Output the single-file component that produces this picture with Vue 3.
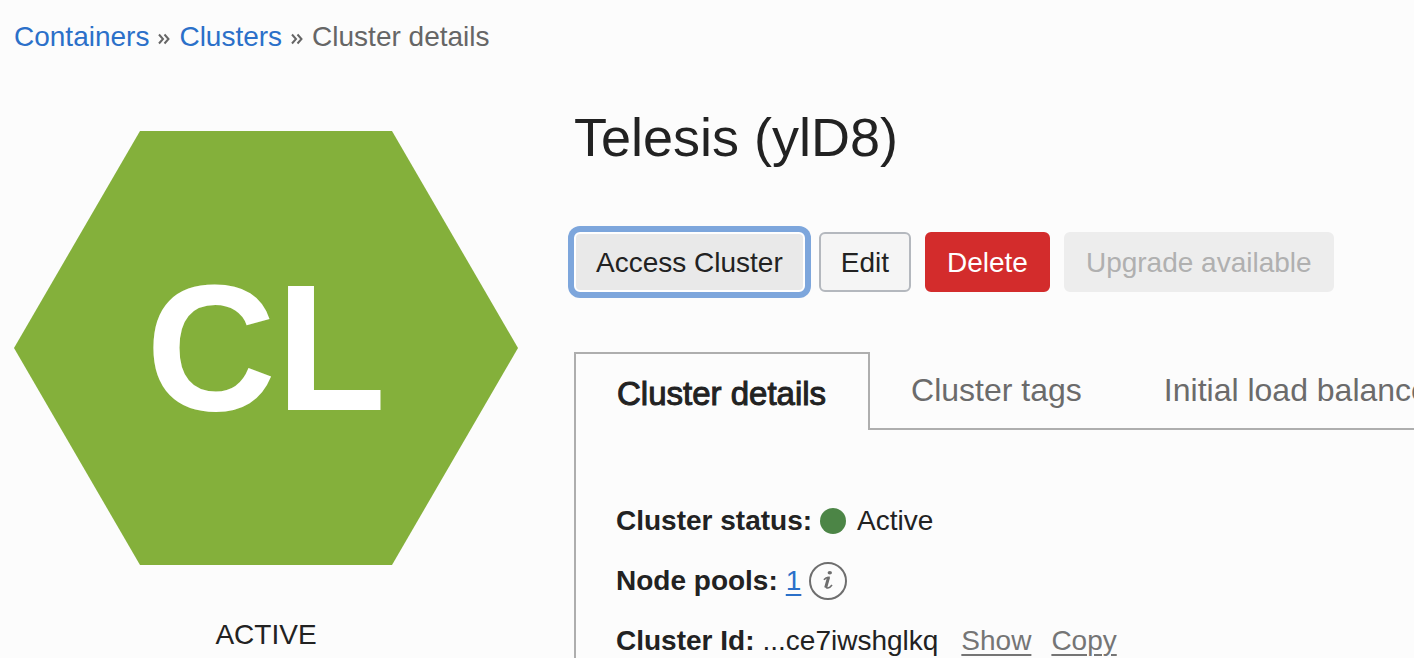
<script setup>
const tabs = [
  { label: 'Cluster details', active: true },
  { label: 'Cluster tags', active: false },
  { label: 'Initial load balancer tags', active: false },
]
</script>

<template>
  <div class="page">
    <nav class="breadcrumb" aria-label="Breadcrumb">
      <a href="#containers">Containers</a>
      <svg class="sep" viewBox="0 0 12 12" aria-hidden="true"><path d="M1 1.5 L5 6 L1 10.5 M6.5 1.5 L10.5 6 L6.5 10.5" /></svg>
      <a href="#clusters">Clusters</a>
      <svg class="sep" viewBox="0 0 12 12" aria-hidden="true"><path d="M1 1.5 L5 6 L1 10.5 M6.5 1.5 L10.5 6 L6.5 10.5" /></svg>
      <span>Cluster details</span>
    </nav>

    <div class="body">
      <aside class="summary">
        <div class="hexagon"><span>CL</span></div>
        <p class="state">ACTIVE</p>
      </aside>

      <main class="content">
        <h1>Telesis (ylD8)</h1>

        <div class="actions">
          <button type="button" class="btn focused">Access Cluster</button>
          <button type="button" class="btn">Edit</button>
          <button type="button" class="btn danger">Delete</button>
          <button type="button" class="btn" disabled>Upgrade available</button>
        </div>

        <div class="tabs" role="tablist">
          <button
            v-for="tab in tabs"
            :key="tab.label"
            type="button"
            role="tab"
            class="tab"
            :class="{ active: tab.active }"
            :aria-selected="tab.active"
          >{{ tab.label }}</button>
        </div>

        <section class="panel" role="tabpanel">
          <div class="row">
            <strong>Cluster status:</strong>
            <span class="dot"></span>
            <span>Active</span>
          </div>
          <div class="row">
            <strong>Node pools:</strong>
            <a href="#node-pools" class="blue">1</a>
            <button type="button" class="info" aria-label="Node pool information">
              <svg viewBox="0 0 38 38" aria-hidden="true">
                <circle cx="19" cy="19" r="18" fill="none" stroke="#6e6e6e" stroke-width="2" />
                <ellipse cx="20.8" cy="10.7" rx="2.2" ry="1.7" fill="#6e6e6e" />
                <path d="M14.9 17.8 C16.4 16 18 15.5 19.8 15.4 L17.2 24 C16.8 27 20.2 26.8 23 23" fill="none" stroke="#6e6e6e" stroke-width="1.6" />
                <path d="M19.6 15.2 L16.7 25.6" fill="none" stroke="#6e6e6e" stroke-width="3" />
              </svg>
            </button>
          </div>
          <div class="row">
            <strong>Cluster Id:</strong>
            <span>...ce7iwshglkq</span>
            <span class="links">
              <a href="#show">Show</a>
              <a href="#copy">Copy</a>
            </span>
          </div>
        </section>
      </main>
    </div>
  </div>
</template>

<style>
html,
body {
  margin: 0;
  background: #fcfcfc;
}
</style>

<style scoped>
.page {
  box-sizing: border-box;
  max-height: 100vh;
  overflow: hidden;
  padding: 17px 0 0 14px;
  color: #222;
  font-family: "Liberation Sans", Arial, sans-serif;
  font-size: 28px;
  line-height: 40px;
}
.breadcrumb {
  display: flex;
  align-items: center;
  gap: 9px;
  color: #666;
}
.breadcrumb a {
  color: #2b70c9;
  text-decoration: none;
}
.sep {
  width: 12px;
  height: 12px;
  margin-top: 4px;
  fill: none;
  stroke: #666;
  stroke-width: 2;
}
.body {
  display: flex;
  gap: 56px;
  padding-top: 47px;
}
.summary {
  flex: none;
  width: 504px;
  padding-top: 27px;
}
.hexagon {
  display: flex;
  align-items: center;
  justify-content: center;
  height: 434px;
  background: #84b03b;
  clip-path: polygon(25% 0, 75% 0, 100% 50%, 75% 100%, 25% 100%, 0 50%);
  color: #fff;
  font-size: 180px;
  font-weight: 700;
  line-height: 200px;
}
.state {
  margin: 50px 0 0;
  text-align: center;
}
.content {
  flex: 1;
  min-width: 0;
}
h1 {
  margin: 0;
  font-size: 54px;
  font-weight: 400;
  line-height: 66px;
}
.actions {
  display: flex;
  gap: 14px;
  margin-top: 62px;
}
button {
  font: inherit;
  color: inherit;
}
.btn {
  height: 60px;
  padding: 2px 20px 0;
  border: 2px solid #b4b8be;
  border-radius: 6px;
  background: #f5f5f5;
  white-space: nowrap;
}
.btn.focused {
  border-color: #fff;
  background: #e9e9e9;
  box-shadow: 0 0 0 6px #7da6dc;
}
.btn.danger {
  border-color: #d32c2c;
  background: #d32c2c;
  color: #fff;
}
.btn:disabled {
  border-color: #ededed;
  background: #ededed;
  color: #b0b0b0;
}
.tabs {
  display: flex;
  height: 78px;
  margin-top: 60px;
  overflow: hidden;
}
.tab {
  flex: none;
  padding: 0 41px;
  border: 0;
  border-bottom: 2px solid #aeaeae;
  background: none;
  color: #6b6b6b;
  font-size: 32px;
  white-space: nowrap;
}
.tab.active {
  border: 2px solid #aeaeae;
  border-bottom: 0;
  padding: 4px 42px 0 41px;
  color: #222;
  font-size: 33px;
  -webkit-text-stroke: 1px #222;
}
.panel {
  display: flex;
  flex-direction: column;
  gap: 20px;
  padding: 71px 40px 0;
  border-left: 2px solid #aeaeae;
}
.row {
  display: flex;
  align-items: center;
  gap: 8px;
  height: 40px;
}
.dot {
  width: 26px;
  height: 26px;
  margin-right: 3px;
  border-radius: 50%;
  background: #4c8546;
}
a {
  color: #757575;
  text-decoration-thickness: 2px;
  text-underline-offset: 4px;
}
.blue {
  color: #2b70c9;
}
.info {
  width: 38px;
  height: 38px;
  padding: 0;
  border: 0;
  background: none;
}
.info svg {
  display: block;
}
.links {
  display: flex;
  gap: 20px;
  margin-left: 15px;
}
</style>
